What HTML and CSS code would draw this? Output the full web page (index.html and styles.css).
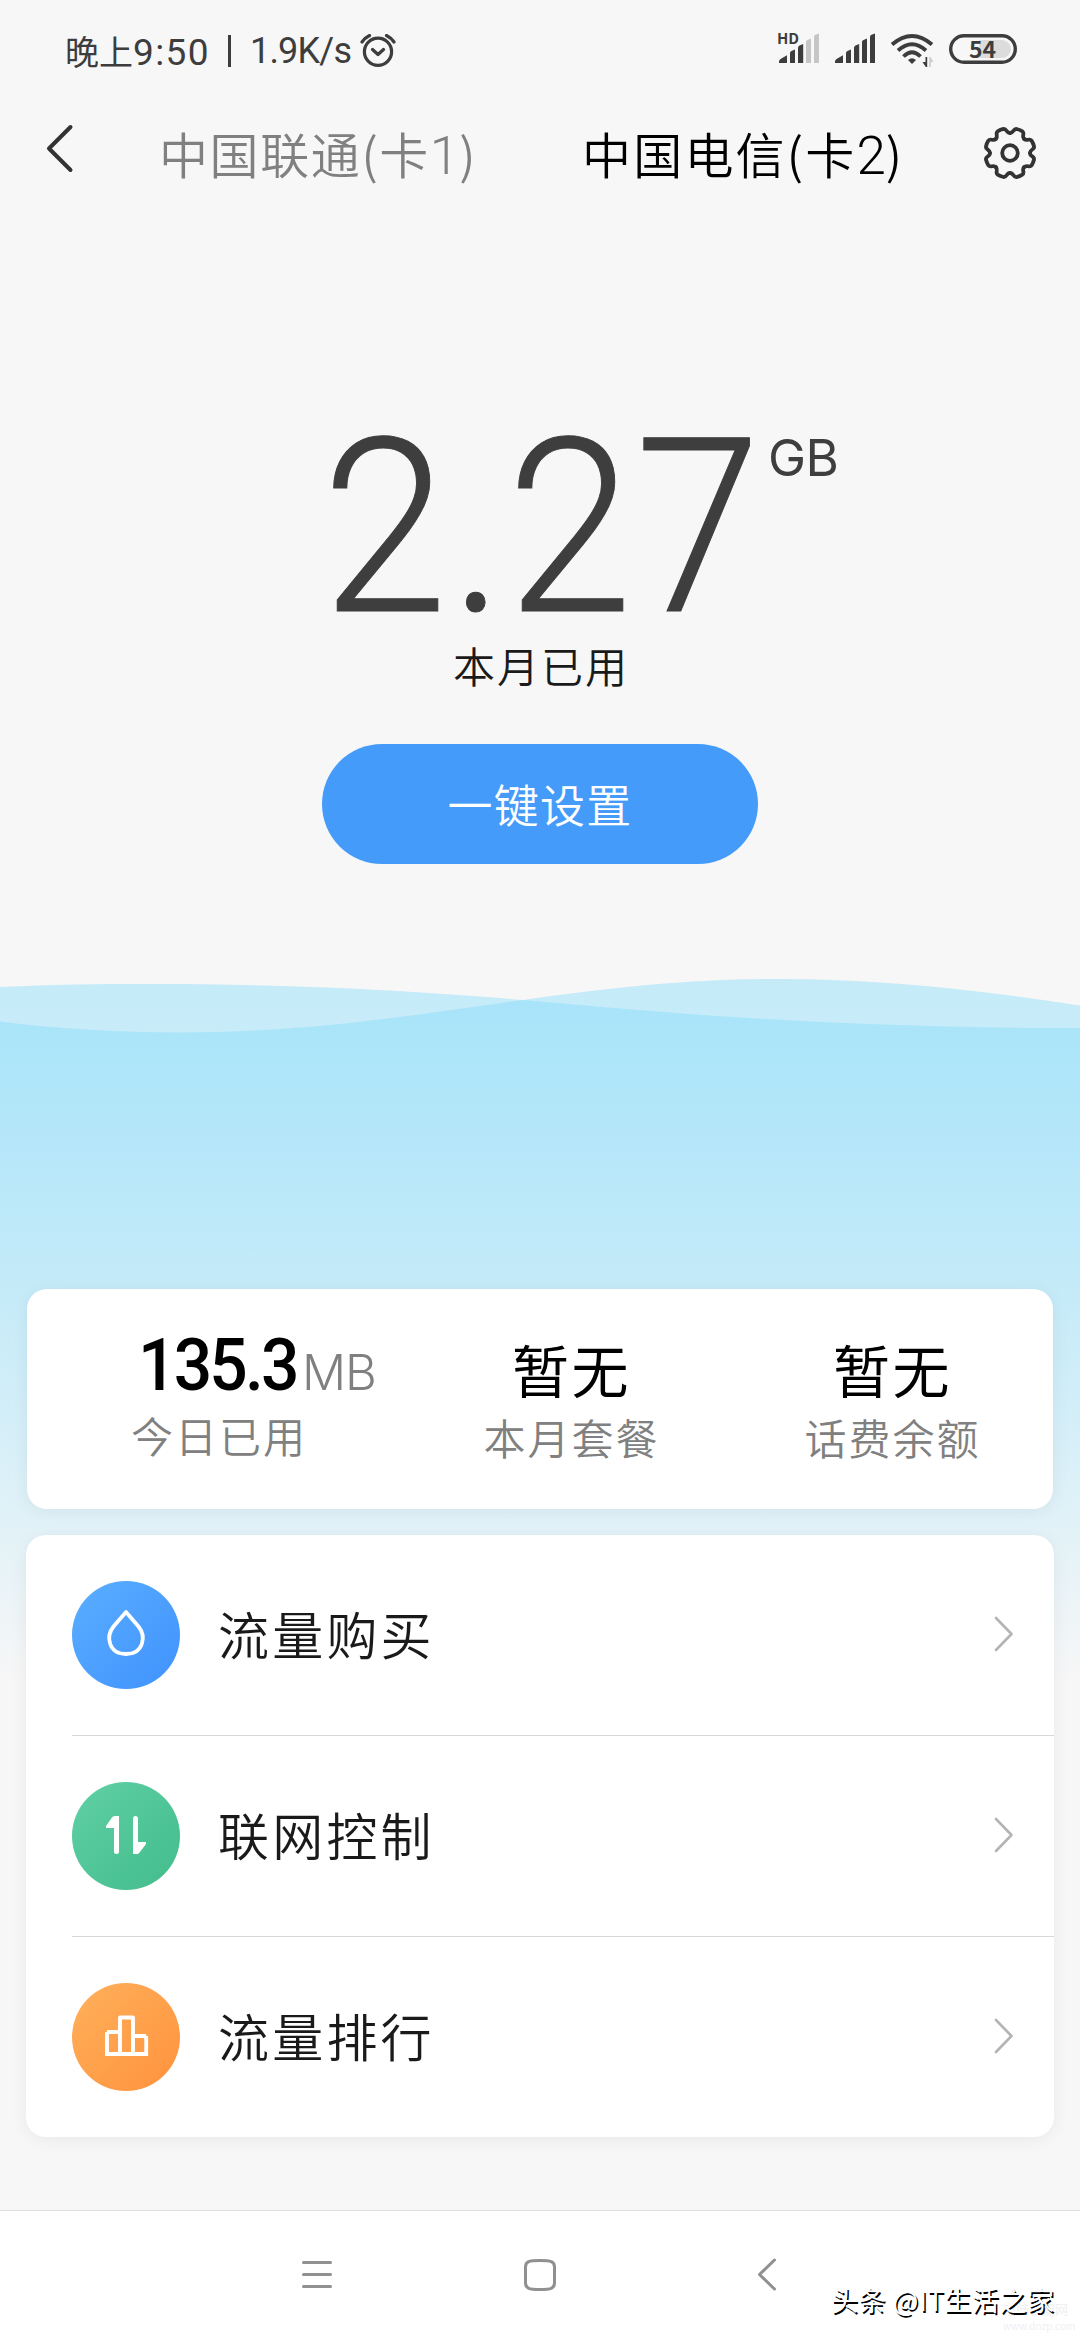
FILE: index.html
```html
<!DOCTYPE html>
<html lang="zh-CN">
<head>
<meta charset="utf-8">
<title>流量</title>
<link rel="stylesheet" href="styles.css">
</head>
<body>
<div class="screen">
  <svg class="waves" width="1080" height="720" viewBox="0 970 1080 720" aria-hidden="true">
    <defs>
      <linearGradient id="sea" gradientUnits="userSpaceOnUse" x1="0" y1="980" x2="0" y2="1680">
        <stop offset="0" stop-color="#79d8fb" stop-opacity=".4"/>
        <stop offset="1" stop-color="#79d8fb" stop-opacity="0"/>
      </linearGradient>
    </defs>
    <path fill="url(#sea)" d="M0 987C50 984.5 100 984 151 984C300 984 430 992 523 1000C700 1016 850 1028 1080 1028V1690H0Z"/>
    <path fill="url(#sea)" d="M0 1021.5C60 1029 120 1032.5 179 1032.5C310 1032.5 410 1015.500 523 1000C620 986 700 979 778 979C880 979 980 990 1080 1005.500V1690H0Z"/>
  </svg>

  <div class="status">
    <span class="time">晚上<span class="clock">9:50</span></span><i class="bar"></i><span class="speed">1.9K/s</span>
    <svg class="alarm" width="36" height="36" viewBox="360 34 36 36" fill="none" stroke="#3d3d3d" stroke-width="3.2" stroke-linecap="round" stroke-linejoin="round">
      <circle cx="378" cy="51.800" r="13.600"/><path d="M362 42C364 39 366.500 37 369.500 35.500M394 42C392 39 389.500 37 386.500 35.500M372.500 49.500L378 54.500L383.500 49.500"/>
    </svg>
    <svg class="radios" width="244" height="44" viewBox="774 26 244 44">
      <text class="hd" x="776" y="44">HD</text>
      <g fill="#3d3d3d">
        <path d="M778 63V61.500Q778 60 779.500 59L786 55.300V63ZM789 63V53Q789 51.500 790.500 51L794 49.500V63ZM797 63V48Q797 46 798.500 45.500L802.200 44V63Z"/>
        <path class="weak" d="M805 63V42Q805 40.500 806.500 40L810 38.500V63ZM813 63V37Q813 35.200 814.500 34.700L818 33.500V63Z"/>
      </g>
      <g fill="#3d3d3d"><path d="M834 63V61.500Q834 60 835.500 59L842 55.300V63ZM845 63V53Q845 51.500 846.500 51L850 49.500V63ZM853 63V48Q853 46 854.500 45.500L858.200 44V63ZM861 63V42Q861 40.500 862.500 40L866 38.500V63ZM869 63V37Q869 35.200 870.500 34.700L874 33.500V63Z"/></g>
      <g fill="none" stroke="#3d3d3d" stroke-width="3.800"><path d="M891 44.500Q911 27.500 931 44.500M897 50.500Q911 38 925 50.500M902.500 56.500Q911 48 919.500 56.500"/></g>
      <path fill="#3d3d3d" d="M907 60Q911 56.500 915 60L911 64Z"/>
      <path fill="#3d3d3d" d="M926.200 57V67H924.800L921.500 62H924.500V57Z"/><path fill="#cfcfcf" d="M928.200 67V57H929.500L932.500 62H930V67Z"/>
      <rect x="949.700" y="35.700" width="64.600" height="26.600" rx="13.300" fill="none" stroke="#3d3d3d" stroke-width="3.400"/>
      <path fill="#dcdcdc" d="M978 40H1001A9 9 0 0 1 1001 58H978Z"/>
      <text class="pct" x="981.500" y="58">54</text>
    </svg>
  </div>

  <div class="tabs">
    <svg class="back" width="30" height="52" viewBox="45 122 30 52" fill="none" stroke="#333" stroke-width="4" stroke-linecap="round" stroke-linejoin="round"><path d="M70.500 127L49 148.500L70.500 170"/></svg>
    <span class="tab">中国联通(卡<span class="digit">1</span>)</span>
    <span class="tab active">中国电信(卡<span class="digit">2</span>)</span>
    <svg class="gear" width="56" height="56" viewBox="-28 -28 56 56" fill="none" stroke="#333" stroke-width="3.800" stroke-linecap="round" stroke-linejoin="round">
      <defs><path id="tooth" d="M0 -20C4 -20 3 -24.500 6.500 -24Q9.700 -23.300 12.400 -21.600C15.200 -19.500 11.300 -17 14.140 -14.140"/></defs>
      <use href="#tooth"/><use href="#tooth" transform="rotate(45)"/><use href="#tooth" transform="rotate(90)"/><use href="#tooth" transform="rotate(135)"/>
      <use href="#tooth" transform="rotate(180)"/><use href="#tooth" transform="rotate(225)"/><use href="#tooth" transform="rotate(270)"/><use href="#tooth" transform="rotate(315)"/>
      <circle r="7.800"/>
    </svg>
  </div>

  <div class="usage">
    <div class="total"><span class="num">2.27</span><span class="unit">GB</span></div>
    <div class="caption">本月已用</div>
    <div class="button">一键设置</div>
  </div>

  <div class="card stats">
    <div class="stat first"><div class="value"><b>135.3</b><span>MB</span></div><div class="label">今日已用</div></div>
    <div class="stat"><div class="value">暂无</div><div class="label">本月套餐</div></div>
    <div class="stat"><div class="value">暂无</div><div class="label">话费余额</div></div>
  </div>

  <div class="card menu">
    <div class="row">
      <span class="icon blue"><svg width="54" height="54" viewBox="-27 -27 54 54" fill="none" stroke="#fff" stroke-width="3.800" stroke-linejoin="round"><path d="M0 -23L-12.500 -8.500C-20.500 1.500 -17.500 19 0 19C17.500 19 20.500 1.500 12.500 -8.500Z"/></svg></span>
      <span class="name">流量购买</span>
      <svg class="go" width="22" height="38" viewBox="0 0 22 38"><path d="M3 3L18.500 19L3 35"/></svg>
    </div>
    <div class="row">
      <span class="icon green"><svg width="54" height="54" viewBox="-27 -27 54 54" fill="#fff"><path d="M-7 -20V15.500Q-7 18-9.500 18T-12 15.500V-8H-20V-10L-14 -18.500Q-13 -20-11.500 -20ZM7 18V-17.500Q7 -20 9.500 -20T12 -17.500V6H20V8L13.500 16.500Q12.500 18 11 18Z"/></svg></span>
      <span class="name">联网控制</span>
      <svg class="go" width="22" height="38" viewBox="0 0 22 38"><path d="M3 3L18.500 19L3 35"/></svg>
    </div>
    <div class="row">
      <span class="icon orange"><svg width="54" height="54" viewBox="-27 -27 54 54" fill="none" stroke="#fff" stroke-width="3.900" stroke-linejoin="round"><path stroke-linejoin="miter" d="M-19 -5V17H20.200V-1"/><path d="M-19 -5H-6M7 -1H20.200M-6 17V-19.500H7V17"/></svg></span>
      <span class="name">流量排行</span>
      <svg class="go" width="22" height="38" viewBox="0 0 22 38"><path d="M3 3L18.500 19L3 35"/></svg>
    </div>
  </div>

  <div class="nav">
    <svg width="34" height="34" viewBox="0 0 34 34"><path d="M3.500 4.500H30.500M3.500 16.500H30.500M3.500 28.500H30.500"/></svg>
    <svg width="34" height="34" viewBox="0 0 34 34"><path d="M17 2.500C28 2.500 31.500 3.500 31.500 9V25C31.500 30.500 28 31.500 17 31.500S2.500 30.500 2.500 25V9C2.500 3.500 6 2.500 17 2.500Z"/></svg>
    <svg width="34" height="34" viewBox="0 0 34 34"><path d="M28.500 2L13.500 16.500L28.500 31"/></svg>
    <div class="site">电脑装配网<small>www.dnzp.com</small></div>
    <div class="credit">头条 @IT生活之家</div>
  </div>
</div>
</body>
</html>
```
FILE: styles.css
```css
* { box-sizing: border-box; }
body { margin: 0; font-family: "Noto Sans CJK SC", sans-serif; background: #f7f7f7; }
svg { display: block; flex: none; }
.screen {
  position: relative;
  width: 1080px;
  height: 2340px;
  display: flex;
  flex-direction: column;
  overflow: hidden;
  background: #f7f7f7;
  white-space: nowrap;
}
.screen > div { position: relative; flex: none; }
.waves { position: absolute; left: 0; top: 970px; }

.status { height: 100px; display: flex; align-items: flex-start; padding: 26px 61px 0 65px; color: #3d3d3d; font-size: 34px; line-height: 50px; }
.time { width: 145px; }
.clock { font-family: Roboto, sans-serif; font-size: 37px; line-height: 1; letter-spacing: 1.400px; }
.bar { width: 3px; height: 32px; margin: 9px 20px 0 18px; background: #3d3d3d; }
.speed { font-family: Roboto, sans-serif; font-size: 36px; line-height: 50px; width: 101px; letter-spacing: -.8px; margin-left: -1px; }
.alarm { margin: 8px 0 0 9px; }
.radios { margin-left: auto; }
.hd { font-size: 15px; font-weight: 700; fill: #3d3d3d; }
.pct { font-size: 23px; font-weight: 700; fill: #3d3d3d; text-anchor: middle; }
.weak { fill: #c6c6c6; }

.tabs { height: 108px; display: flex; align-items: flex-start; padding-left: 45px; }
.back { margin-top: 22px; }
.tab { font-size: 49px; line-height: 60px; font-weight: 350; color: #808080; margin: 23px 0 0 84px; width: 314px; letter-spacing: 1.600px; }
.tab.active { color: #000; margin-left: 109px; width: 330px; letter-spacing: 2.200px; }
.digit { font-family: Roboto, sans-serif; font-size: 53px; line-height: 1; font-weight: 300; letter-spacing: 0; }
.gear { margin: 25px 0 0 70px; }

.usage { height: 1081px; display: flex; flex-direction: column; align-items: center; }
.total { display: flex; width: 1080px; padding-left: 322px; margin-top: 200px; height: 230px; color: #3e3e3e; }
.num { font-family: Roboto, sans-serif; font-size: 243px; line-height: 200px; margin-top: 20px; font-weight: 300; letter-spacing: 3px; width: 446px; transform: scaleX(.93); transform-origin: left; -webkit-text-stroke: 1px #3e3e3e; }
.unit { font-family: Inter, sans-serif; font-size: 51px; line-height: 60px; margin-top: 20px; font-weight: 400; letter-spacing: -.5px; }
.caption { font-size: 42px; line-height: 50px; letter-spacing: 2px; color: #1a1a1a; margin-top: 2px; font-weight: 350; padding-left: 2px; }
.button { width: 436px; height: 120px; margin-top: 54px; border-radius: 60px; background: #449bf9; color: #fff; font-size: 45px; line-height: 120px; text-align: center; letter-spacing: 1.2px; font-weight: 350; }

.card { background: #fff; border-radius: 20px; box-shadow: 0 3px 18px rgba(0,0,0,.06); }
.stats { width: 1026px; height: 220px; margin: 0 27px; display: grid; grid-template-columns: 384px 321px 321px; }
.stat { text-align: center; padding-top: 41px; }
.value { font-size: 57px; line-height: 76px; letter-spacing: 2.500px; color: #000; }
.label { font-size: 42px; line-height: 56px; letter-spacing: 2px; color: #808080; font-weight: 350; margin-top: 3px; }
.first { text-align: left; padding: 39px 0 0 104px; }
.first .value { display: flex; align-items: baseline; padding-left: 7px; height: 76px; letter-spacing: 0; }
.first b { font-family: Roboto, sans-serif; font-size: 72px; font-weight: 500; letter-spacing: -3px; width: 164px; transform: scaleX(.94); transform-origin: left; }
.first span { font-family: Inter, sans-serif; font-size: 49px; font-weight: 300; color: #808080; letter-spacing: -1px; }

.menu { width: 1028px; margin: 26px 26px 0; height: 602px; }
.row { height: 201px; margin-left: 46px; display: flex; align-items: center; border-bottom: 1px solid #d8d8d8; }
.row:last-child { border: 0; height: 200px; }
.icon { width: 108px; height: 108px; border-radius: 50%; display: grid; place-items: center; }
.blue { background: linear-gradient(135deg, #5aaeff, #4092fd); }
.green { background: linear-gradient(135deg, #60d0a5, #42bc8b); }
.orange { background: linear-gradient(135deg, #ffb05c, #ff923c); }
.name { font-size: 51px; line-height: 70px; letter-spacing: 3.200px; color: #1a1a1a; margin-left: 38px; padding-bottom: 5px; flex: 1; font-weight: 350; }
.go { margin: 0 39px 2px 0; fill: none; stroke: #b4b4b4; stroke-width: 2.600; stroke-linecap: round; stroke-linejoin: round; }

.nav { margin-top: 73px; height: 130px; border-top: 1px solid #e0e0e0; background: #fff; display: flex; padding: 47px 0 0 300px; gap: 189px; }
.nav svg { fill: none; stroke: #909090; stroke-width: 3; stroke-linecap: round; stroke-linejoin: round; }
.credit { position: absolute; left: 831px; top: 69px; font-size: 27px; line-height: 40px; letter-spacing: .6px; color: #fff; text-shadow: 1.500px 1.500px 0 #000; }
.site { position: absolute; left: 1003px; top: 88px; font-size: 13px; line-height: 20px; color: #f0f0f0; }
.site small { display: block; font-size: 10px; line-height: 14px; }
```
